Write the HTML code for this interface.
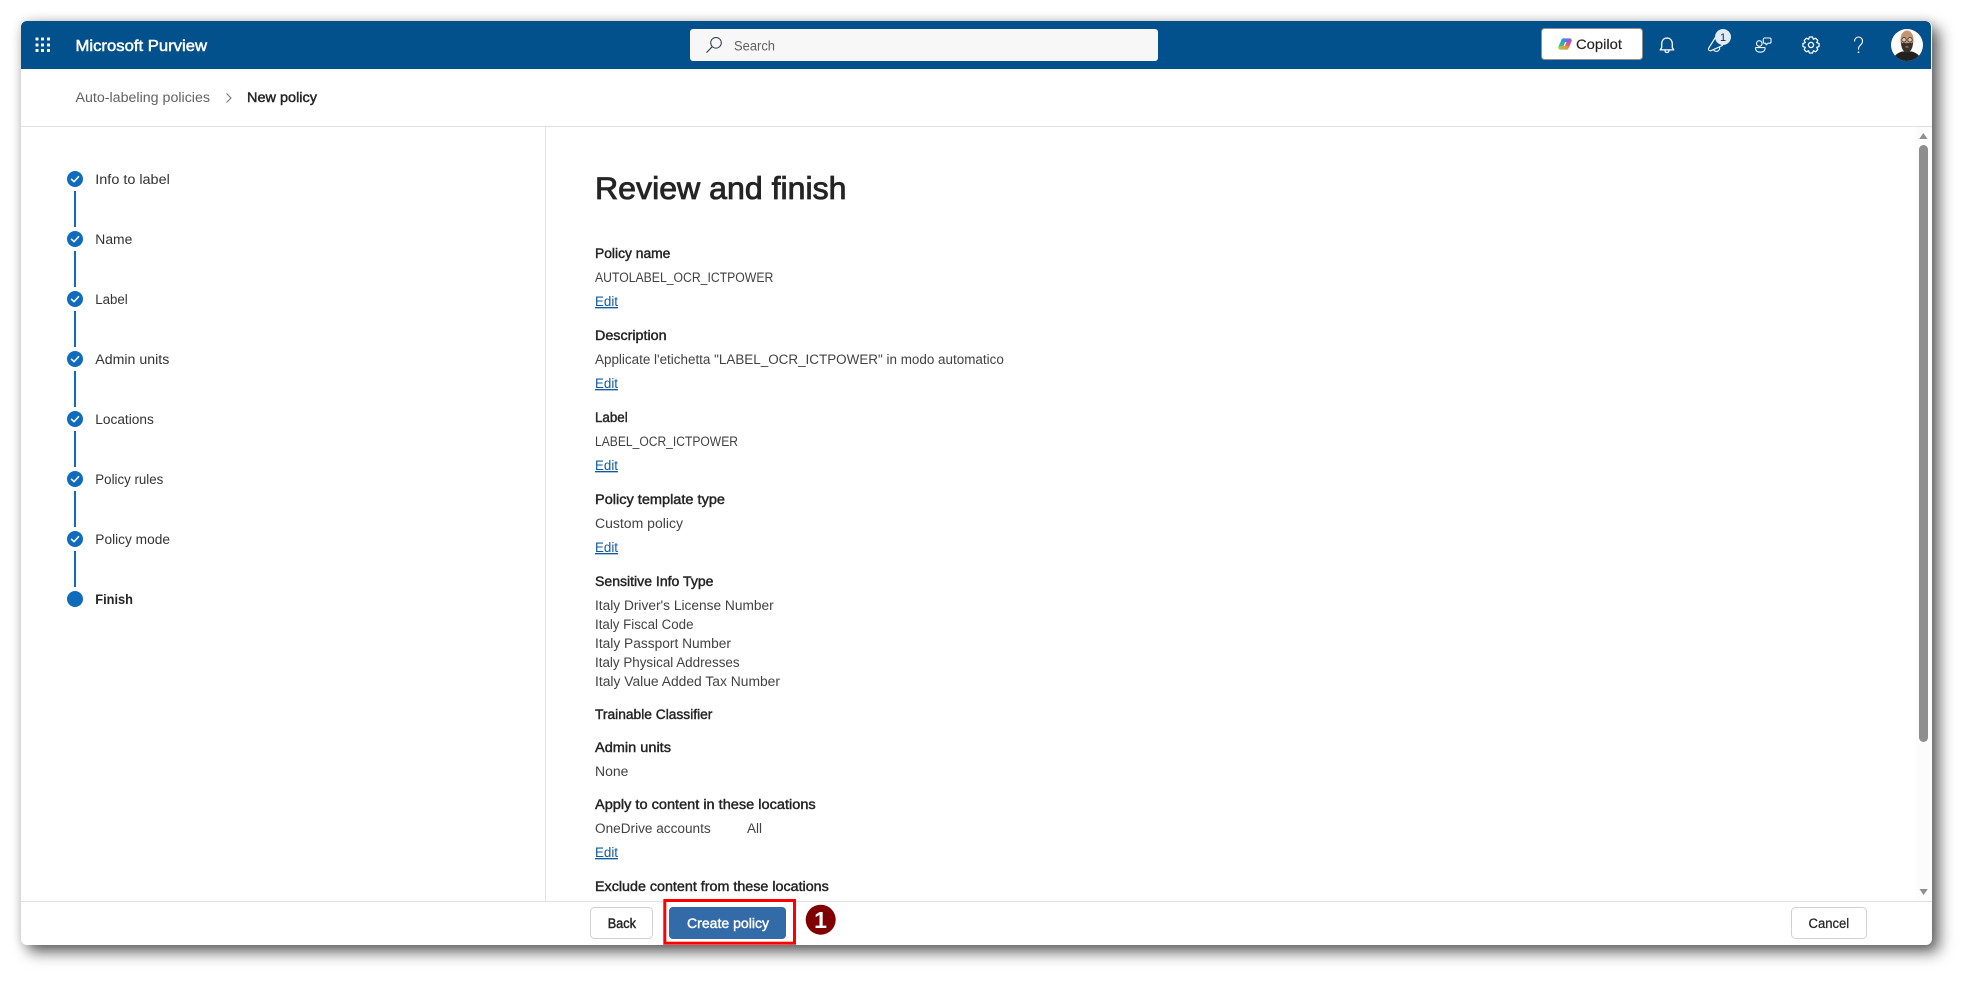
<!DOCTYPE html>
<html lang="en">
<head>
<meta charset="utf-8">
<title>Microsoft Purview - New policy</title>
<style>
html,body{margin:0;padding:0;width:1974px;height:987px;background:#fff;overflow:hidden}
#win{position:absolute;left:21px;top:21px;width:1911px;height:924px;background:#fff;border-radius:6px;box-shadow:7px 7px 15px rgba(0,0,0,.62),0 0 10px rgba(0,0,0,.14)}
svg{position:absolute;left:0;top:0}
text{font-family:"Liberation Sans",sans-serif;font-size:13.5px;white-space:pre}
.s{fill:#242424;stroke:#242424;stroke-width:.42}
.v{fill:#424242}
.n{fill:#333}
.l{fill:#0f5a9e;text-decoration:underline}
</style>
</head>
<body>
<div id="win"></div>
<svg width="1974" height="987" viewBox="0 0 1974 987" xmlns="http://www.w3.org/2000/svg">
<defs>
<linearGradient id="cA" gradientUnits="userSpaceOnUse" x1="1563" y1="38" x2="1559" y2="50"><stop offset="0" stop-color="#1f9fe0"/><stop offset=".6" stop-color="#3fb68a"/><stop offset="1" stop-color="#b6d63a"/></linearGradient>
<linearGradient id="cB" gradientUnits="userSpaceOnUse" x1="1570" y1="38" x2="1565" y2="50"><stop offset="0" stop-color="#a54bd6"/><stop offset=".5" stop-color="#ee4f7c"/><stop offset="1" stop-color="#f89a3c"/></linearGradient>
<linearGradient id="cC" gradientUnits="userSpaceOnUse" x1="1561" y1="40" x2="1571" y2="40"><stop offset="0" stop-color="#1f9fe0"/><stop offset="1" stop-color="#8a5be0"/></linearGradient>
<linearGradient id="cD" gradientUnits="userSpaceOnUse" x1="1559" y1="48" x2="1569" y2="48"><stop offset="0" stop-color="#9ccf4a"/><stop offset="1" stop-color="#f8853c"/></linearGradient>
<clipPath id="av"><circle cx="1907" cy="45" r="16"/></clipPath>
</defs>

<!-- header -->
<path d="M21 69V27a6 6 0 0 1 6-6H1925a6 6 0 0 1 6 6V69z" fill="#02508c"/>
<g fill="#fff">
<rect x="35.5" y="37.5" width="3" height="3" rx=".5"/><rect x="41" y="37.5" width="3" height="3" rx=".5"/><rect x="47" y="37.5" width="3" height="3" rx=".5"/>
<rect x="35.5" y="43.5" width="3" height="3" rx=".5"/><rect x="41" y="43.5" width="3" height="3" rx=".5"/><rect x="47" y="43.5" width="3" height="3" rx=".5"/>
<rect x="35.5" y="49" width="3" height="3" rx=".5"/><rect x="41" y="49" width="3" height="3" rx=".5"/><rect x="47" y="49" width="3" height="3" rx=".5"/>
</g>
<text x="75.5" y="51" textLength="131.5" lengthAdjust="spacingAndGlyphs" style="font-size:15.5px;fill:#fff;stroke:#fff;stroke-width:.5">Microsoft Purview</text>

<!-- search -->
<rect x="690" y="29" width="468" height="32" rx="3" fill="#f7f7f7"/>
<circle cx="716" cy="42.8" r="5.3" fill="none" stroke="#2b3a4a" stroke-width="1"/>
<path d="M712.2 46.6L706.5 52.6" stroke="#2b3a4a" stroke-width="1.1" fill="none"/>
<text x="734" y="50.5" textLength="41" lengthAdjust="spacingAndGlyphs" style="fill:#616161">Search</text>

<!-- copilot -->
<rect x="1541.5" y="28.5" width="101" height="31" rx="3" fill="#fff" stroke="#8f8f8f"/>
<g fill="none" stroke-width="4.4" stroke-linecap="round">
<path d="M1563.500 40.500L1560.500 47.500" stroke="url(#cA)"/>
<path d="M1569.500 40.500L1566.500 47.500" stroke="url(#cB)"/>
<path d="M1563.500 40.200H1568.500" stroke="url(#cC)" stroke-width="3.600"/>
<path d="M1561 47.800H1566.500" stroke="url(#cD)" stroke-width="3.600"/>
</g>
<text x="1576" y="49" textLength="46" lengthAdjust="spacingAndGlyphs" style="font-size:14px;fill:#242424;stroke:#242424;stroke-width:.15">Copilot</text>

<!-- bell -->
<g fill="none" stroke="#fff" stroke-width="1.3" stroke-linejoin="round">
<path d="M1667 38c-3.4 0-5.300 2.700-5.300 6v3.600l-1.500 2.300h13.600l-1.500-2.300V44c0-3.300-1.900-6-5.300-6z"/>
<path d="M1665 50.500a2 2 0 0 0 4 0"/>
</g>
<!-- megaphone -->
<g fill="none" stroke="#f2f7fb" stroke-width="1.2" stroke-linejoin="round">
<path d="M1708.600 48.300L1716 36.500L1722.500 45.500L1711 50.700Q1707.800 51 1708.600 48.300z"/>
<path d="M1713.500 49.800a3.300 3.300 0 0 0 6-2.600"/>
</g>
<circle cx="1723" cy="37" r="8" fill="#deecf9"/>
<text x="1723" y="41" text-anchor="middle" style="font-size:11px;fill:#242424">1</text>
<!-- feedback -->
<g fill="none" stroke="#f2f7fb" stroke-width="1.1" stroke-linejoin="round">
<circle cx="1759.300" cy="43.500" r="2.800"/>
<path d="M1756 47.600h8.600q.6 0 .5 1c-.3 2.400-2 3.600-4.800 3.600s-4.500-1.200-4.800-3.600q-.1-1 .5-1z"/>
<path d="M1764.500 38h5.300q1.200 0 1.200 1.200v2.800q0 1.200-1.200 1.200h-1.800l-1.800 1.700-.6-1.700h-1.100q-1.200 0-1.200-1.200v-2.800q0-1.200 1.200-1.200z"/>
</g>
<!-- gear -->
<g transform="translate(1811 45)" fill="none" stroke="#fff" stroke-width="1.25" stroke-linejoin="round">
<path d="M8.050-1.560L8.050 1.560L5.730 2.370L6.800 4.590L4.590 6.800L2.370 5.730L1.560 8.050L-1.560 8.050L-2.370 5.730L-4.590 6.800L-6.800 4.590L-5.730 2.370L-8.050 1.560L-8.050-1.560L-5.730-2.370L-6.800-4.590L-4.590-6.800L-2.370-5.730L-1.560-8.050L1.560-8.050L2.370-5.730L4.590-6.800L6.800-4.590L5.730-2.370z"/>
<circle r="2.600"/>
</g>
<!-- help -->
<path d="M1854.500 41.500c0-2.800 1.800-4.500 4-4.500s4 1.700 4 4.200c0 3.700-4 3.900-4 7.600v.8" fill="none" stroke="#fff" stroke-width="1.100"/>
<circle cx="1858.500" cy="52.300" r=".9" fill="#fff"/>
<!-- avatar -->
<g clip-path="url(#av)">
<rect x="1890" y="28" width="34" height="34" fill="#fdfdfb"/>
<path d="M1893 62c0-6 4-9 9-10.500h10c5 1.500 9 4.500 9 10.500z" fill="#23211f"/>
<ellipse cx="1907" cy="39.500" rx="6.500" ry="9" fill="#c29470"/>
<path d="M1900.800 41c.2 7 2.500 11.500 6.200 11.500s6-4.500 6.200-11.500l-1.200 2.500q-1.500-1-2.500-.6-2.500.8-5 0-1-.4-2.500.6z" fill="#3a2f29"/>
<circle cx="1904" cy="39.800" r="2.200" fill="#d8cabb" stroke="#2b2623" stroke-width=".7"/>
<circle cx="1910" cy="39.800" r="2.200" fill="#d8cabb" stroke="#2b2623" stroke-width=".7"/>
<rect x="1905.500" y="46.500" width="3" height=".9" fill="#caa48a"/>
</g>

<!-- breadcrumb -->
<text x="75.500" y="102" textLength="134.500" lengthAdjust="spacingAndGlyphs" style="fill:#616161">Auto-labeling policies</text>
<path d="M226.500 93.500L231 98L226.500 102.500" fill="none" stroke="#707070" stroke-width="1"/>
<text x="247" y="102" textLength="70" lengthAdjust="spacingAndGlyphs" class="s">New policy</text>

<!-- dividers -->
<rect x="21" y="126" width="1911" height="1" fill="#e0e0e0"/>
<rect x="545" y="127" width="1" height="774" fill="#e0e0e0"/>
<rect x="21" y="901" width="1911" height="1" fill="#e0e0e0"/>

<!-- steps -->
<g fill="#0f6cbd">
<circle cx="75" cy="179" r="8"/><circle cx="75" cy="239" r="8"/><circle cx="75" cy="299" r="8"/><circle cx="75" cy="359" r="8"/><circle cx="75" cy="419" r="8"/><circle cx="75" cy="479" r="8"/><circle cx="75" cy="539" r="8"/><circle cx="75" cy="599" r="8"/>
<rect x="74" y="191" width="2" height="36"/><rect x="74" y="251" width="2" height="36"/><rect x="74" y="311" width="2" height="36"/><rect x="74" y="371" width="2" height="36"/><rect x="74" y="431" width="2" height="36"/><rect x="74" y="491" width="2" height="36"/><rect x="74" y="551" width="2" height="36"/>
</g>
<g fill="none" stroke="#fff" stroke-width="1.500" stroke-linecap="round" stroke-linejoin="round">
<path d="M71.500 179.300L74 181.700L78.500 176.700"/><path d="M71.500 239.300L74 241.700L78.500 236.700"/><path d="M71.500 299.300L74 301.700L78.500 296.700"/><path d="M71.500 359.300L74 361.700L78.500 356.700"/><path d="M71.500 419.300L74 421.700L78.500 416.700"/><path d="M71.500 479.300L74 481.700L78.500 476.700"/><path d="M71.500 539.300L74 541.700L78.500 536.700"/>
</g>
<text class="n" x="95.300" y="184" textLength="74.500" lengthAdjust="spacingAndGlyphs">Info to label</text>
<text class="n" x="95.300" y="244" textLength="37" lengthAdjust="spacingAndGlyphs">Name</text>
<text class="n" x="95.300" y="304" textLength="32.400" lengthAdjust="spacingAndGlyphs">Label</text>
<text class="n" x="95.300" y="364" textLength="74" lengthAdjust="spacingAndGlyphs">Admin units</text>
<text class="n" x="95.300" y="424" textLength="58.500" lengthAdjust="spacingAndGlyphs">Locations</text>
<text class="n" x="95.300" y="484" textLength="68" lengthAdjust="spacingAndGlyphs">Policy rules</text>
<text class="n" x="95.300" y="544" textLength="74.700" lengthAdjust="spacingAndGlyphs">Policy mode</text>
<text x="95.300" y="604" textLength="37.700" lengthAdjust="spacingAndGlyphs" style="font-weight:700;fill:#242424">Finish</text>

<!-- content -->
<text x="595" y="199" textLength="251.500" lengthAdjust="spacingAndGlyphs" style="font-size:31.5px;fill:#242424;stroke:#242424;stroke-width:.85">Review and finish</text>

<text class="s" x="595" y="258" textLength="75.400" lengthAdjust="spacingAndGlyphs">Policy name</text>
<text class="v" x="595" y="282" textLength="178.300" lengthAdjust="spacingAndGlyphs">AUTOLABEL_OCR_ICTPOWER</text>
<text class="l" x="595" y="306" textLength="23" lengthAdjust="spacingAndGlyphs">Edit</text>

<text class="s" x="595" y="340" textLength="71.600" lengthAdjust="spacingAndGlyphs">Description</text>
<text class="v" x="595" y="364" textLength="408.800" lengthAdjust="spacingAndGlyphs">Applicate l'etichetta "LABEL_OCR_ICTPOWER" in modo automatico</text>
<text class="l" x="595" y="388" textLength="23" lengthAdjust="spacingAndGlyphs">Edit</text>

<text class="s" x="595" y="422" textLength="32.700" lengthAdjust="spacingAndGlyphs">Label</text>
<text class="v" x="595" y="446" textLength="143" lengthAdjust="spacingAndGlyphs">LABEL_OCR_ICTPOWER</text>
<text class="l" x="595" y="470" textLength="23" lengthAdjust="spacingAndGlyphs">Edit</text>

<text class="s" x="595" y="504" textLength="130" lengthAdjust="spacingAndGlyphs">Policy template type</text>
<text class="v" x="595" y="528" textLength="88" lengthAdjust="spacingAndGlyphs">Custom policy</text>
<text class="l" x="595" y="552" textLength="23" lengthAdjust="spacingAndGlyphs">Edit</text>

<text class="s" x="595" y="586" textLength="118.500" lengthAdjust="spacingAndGlyphs">Sensitive Info Type</text>
<text class="v" x="595" y="610" textLength="178.700" lengthAdjust="spacingAndGlyphs">Italy Driver's License Number</text>
<text class="v" x="595" y="629" textLength="98.500" lengthAdjust="spacingAndGlyphs">Italy Fiscal Code</text>
<text class="v" x="595" y="648" textLength="136" lengthAdjust="spacingAndGlyphs">Italy Passport Number</text>
<text class="v" x="595" y="667" textLength="144.600" lengthAdjust="spacingAndGlyphs">Italy Physical Addresses</text>
<text class="v" x="595" y="686" textLength="185" lengthAdjust="spacingAndGlyphs">Italy Value Added Tax Number</text>

<text class="s" x="595" y="719" textLength="117.400" lengthAdjust="spacingAndGlyphs">Trainable Classifier</text>

<text class="s" x="595" y="752" textLength="76" lengthAdjust="spacingAndGlyphs">Admin units</text>
<text class="v" x="595" y="776" textLength="33.400" lengthAdjust="spacingAndGlyphs">None</text>

<text class="s" x="595" y="809" textLength="220.700" lengthAdjust="spacingAndGlyphs">Apply to content in these locations</text>
<text class="v" x="595" y="833" textLength="115.700" lengthAdjust="spacingAndGlyphs">OneDrive accounts</text>
<text class="v" x="747" y="833" textLength="15" lengthAdjust="spacingAndGlyphs">All</text>
<text class="l" x="595" y="857" textLength="23" lengthAdjust="spacingAndGlyphs">Edit</text>

<text class="s" x="595" y="891" textLength="233.800" lengthAdjust="spacingAndGlyphs">Exclude content from these locations</text>

<!-- scrollbar -->
<rect x="1916" y="127" width="15.500" height="774" fill="#fcfcfc"/>
<path d="M1923.300 133L1927.500 139H1919.200z" fill="#8f8f8f"/>
<rect x="1919" y="145" width="9" height="597" rx="4.500" fill="#8e8e8e"/>
<path d="M1919.500 889H1927.800L1923.600 895z" fill="#8f8f8f"/>

<!-- footer -->
<rect x="590.500" y="907.500" width="62" height="31" rx="4" fill="#fff" stroke="#d1d1d1"/>
<text x="607.700" y="928" textLength="28.300" lengthAdjust="spacingAndGlyphs" class="s">Back</text>
<rect x="669" y="907" width="117" height="32" rx="4" fill="#336ba8"/>
<text x="687" y="928" textLength="82" lengthAdjust="spacingAndGlyphs" style="fill:#fff;stroke:#fff;stroke-width:.42">Create policy</text>
<rect x="664.800" y="900.500" width="129.700" height="42.700" fill="none" stroke="#ff0000" stroke-width="3"/>
<circle cx="820.700" cy="919.700" r="15" fill="#7f0000"/>
<text x="820.500" y="928" text-anchor="middle" style="font-size:23px;font-weight:700;fill:#fff">1</text>
<rect x="1791.500" y="907.500" width="75" height="31" rx="4" fill="#fff" stroke="#d1d1d1"/>
<text x="1808.500" y="928" textLength="40.700" lengthAdjust="spacingAndGlyphs" style="fill:#242424;stroke:#242424;stroke-width:.25">Cancel</text>
</svg>
</body>
</html>
